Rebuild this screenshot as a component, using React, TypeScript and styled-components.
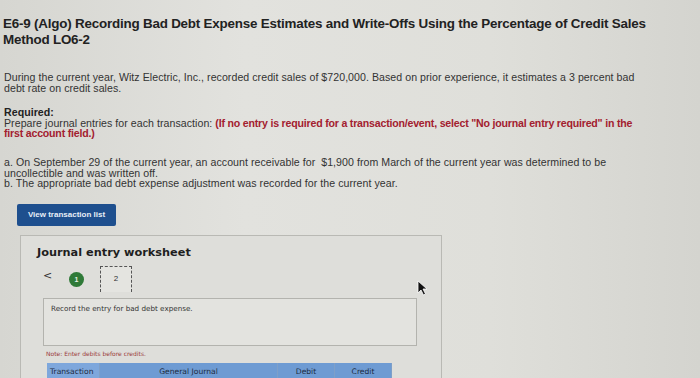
import styled, { createGlobalStyle } from 'styled-components'

const Global = createGlobalStyle`
  html, body {
    margin: 0;
    padding: 0;
    background: #dbdbd6;
    overflow: hidden;
  }
  body {
    font-family: "Liberation Sans", Arial, sans-serif;
    color: #2b2b2b;
  }
`

export default function App() {
  return (
    <Page>
      <Global />
      <Title>
        E6-9 (Algo) Recording Bad Debt Expense Estimates and Write-Offs Using the Percentage of Credit Sales
        <br />
        Method LO6-2
      </Title>
      <Para>
        During the current year, Witz Electric, Inc., recorded credit sales of $720,000. Based on prior experience, it estimates a 3 percent bad
        <br />
        debt rate on credit sales.
      </Para>
      <Para $gap={14}>
        <b>Required:</b>
        <br />
        Prepare journal entries for each transaction: <Red>(If no entry is required for a transaction/event, select "No journal entry required" in the
        <br />
        first account field.)</Red>
      </Para>
      <Para $gap={18}>
        a. On September 29 of the current year, an account receivable for &nbsp;$1,900 from March of the current year was determined to be
        <br />
        uncollectible and was written off.
        <br />
        b. The appropriate bad debt expense adjustment was recorded for the current year.
      </Para>
      <ListButton>View transaction list</ListButton>

      <Worksheet>
        <SheetTitle>Journal entry worksheet</SheetTitle>
        <NavRow>
          <Chevron>&lt;</Chevron>
          <Done>1</Done>
          <Tab>2</Tab>
        </NavRow>
        <EntryBox>Record the entry for bad debt expense.</EntryBox>
        <Note>Note: Enter debits before credits.</Note>
        <Table>
          <HeadCell $w={53}>Transaction</HeadCell>
          <HeadCell $w={178} $center>General Journal</HeadCell>
          <HeadCell $w={57} $center>Debit</HeadCell>
          <HeadCell $w={57} $center>Credit</HeadCell>
        </Table>
        <Cursor width="12" height="16" viewBox="0 0 12 16">
          <path d="M1 1 L1 13 L4 10 L6.5 15 L8.5 14 L6 9 L10 9 Z" fill="#111" stroke="#fff" strokeWidth="0.8" />
        </Cursor>
      </Worksheet>
    </Page>
  )
}

const Page = styled.div`
  width: 700px;
  height: 378px;
  box-sizing: border-box;
  padding: 16px 0 0 3px;
  background: linear-gradient(90deg, #d6d6d1 0%, #e2e2de 35%, #dfdfda 70%, #d4d4cf 100%);
  overflow: hidden;
`

const Title = styled.h1`
  margin: 0;
  white-space: nowrap;
  font-size: 13.4px;
  line-height: 16px;
  font-weight: bold;
  color: #222;
  letter-spacing: -0.2px;
`

const Para = styled.p<{ $gap?: number }>`
  margin: ${(p) => p.$gap ?? 24}px 0 0 1px;
  white-space: nowrap;
  font-size: 10.6px;
  line-height: 10.6px;
  letter-spacing: 0.05px;
  color: #333;
  b {
    color: #222;
  }
`

const Red = styled.span`
  color: #a3202f;
  font-weight: bold;
  letter-spacing: -0.2px;
`

const ListButton = styled.button`
  display: block;
  margin: 15px 0 0 14px;
  width: 99px;
  height: 22px;
  border: none;
  border-radius: 2px;
  background: #1e4f8e;
  color: #e8eef7;
  font-family: "Liberation Sans", Arial, sans-serif;
  font-size: 8px;
  font-weight: bold;
  padding: 0;
`

const Worksheet = styled.div`
  position: relative;
  margin: 9px 0 0 17px;
  width: 422px;
  height: 200px;
  box-sizing: border-box;
  border: 1px solid #b9b9b4;
  background: #dededa;
  padding: 10px 0 0 16px;
`

const SheetTitle = styled.h2`
  margin: 0;
  font-family: "DejaVu Sans", Verdana, sans-serif;
  font-size: 11.3px;
  font-weight: bold;
  color: #1e1e1e;
`

const NavRow = styled.div`
  display: flex;
  align-items: center;
  margin: 7px 0 0 6px;
  height: 27px;
`

const Chevron = styled.span`
  font-family: "DejaVu Sans", sans-serif;
  font-size: 11px;
  color: #333;
  margin-top: -8px;
  width: 26px;
`

const Done = styled.span`
  display: flex;
  align-items: center;
  justify-content: center;
  width: 15px;
  height: 15px;
  border-radius: 50%;
  background: #2f7a38;
  color: #e6f2e6;
  font-size: 7px;
  font-weight: bold;
`

const Tab = styled.span`
  display: flex;
  align-items: center;
  justify-content: center;
  margin-left: 16px;
  width: 32px;
  height: 26px;
  box-sizing: border-box;
  border: 1px dashed #555;
  border-bottom: none;
  background: #e4e4e0;
  font-size: 8px;
  color: #333;
  padding-bottom: 3px;
`

const EntryBox = styled.div`
  margin: 5px 0 0 6px;
  width: 374px;
  height: 48px;
  box-sizing: border-box;
  border: 1px solid #b3b3ae;
  background: #e3e3df;
  padding: 5px 7px;
  font-family: "DejaVu Sans", Verdana, sans-serif;
  font-size: 7.2px;
  color: #333;
`

const Note = styled.div`
  margin: 4px 0 0 9px;
  font-family: "DejaVu Sans", Verdana, sans-serif;
  font-size: 6px;
  color: #9a3b3b;
`

const Table = styled.div`
  display: flex;
  margin: 6px 0 0 10px;
  height: 20px;
`

const HeadCell = styled.div<{ $w: number; $center?: boolean }>`
  width: ${(p) => p.$w}px;
  box-sizing: border-box;
  border-right: 1px solid #7e9fc8;
  background: #6e9bd3;
  color: #1d2b40;
  font-family: "DejaVu Sans", Verdana, sans-serif;
  font-size: 7.6px;
  padding: 4px 3px;
  text-align: ${(p) => (p.$center ? 'center' : 'left')};
  &:first-child {
    background: #7ea7dc;
  }
`

const Cursor = styled.svg`
  position: absolute;
  left: 396px;
  top: 44px;
`
